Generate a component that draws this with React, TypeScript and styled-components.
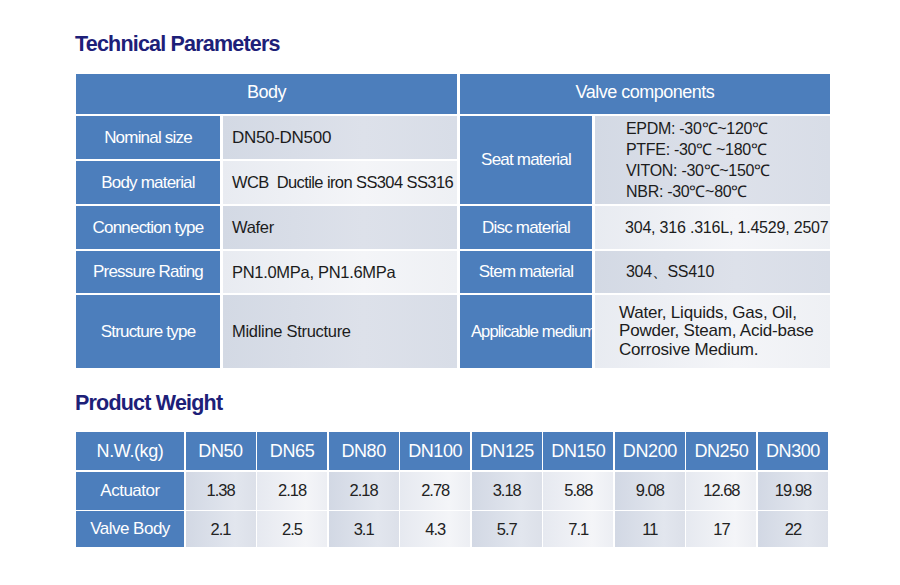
import React from "react";
import styled, { createGlobalStyle, css } from "styled-components";

const Global = createGlobalStyle`
  html, body { margin: 0; padding: 0; background: #ffffff; }
  body { font-family: "Liberation Sans", Arial, sans-serif; }
`;

const Page = styled.div`
  width: 900px;
  height: 585px;
  box-sizing: border-box;
  padding: 32px 0 0 76px;
  display: flex;
  flex-direction: column;
  overflow: hidden;
`;

const Title = styled.h2<{ $mt?: number }>`
  margin: ${(p) => p.$mt ?? 0}px 0 0 -1px;
  font-family: "Liberation Sans", Arial, sans-serif;
  font-weight: 700;
  font-size: 21.5px;
  line-height: 24px;
  letter-spacing: -0.8px;
  color: #1d2078;
`;

const ParamGrid = styled.div`
  margin-top: 18px;
  width: 754px;
  display: grid;
  grid-template-columns: 144px 234px 132px 235px;
  grid-template-rows: 40px 43px 43px 43px 42px 73px;
  column-gap: 3px;
  row-gap: 2px;
`;

const blue = "#4c7ebc";

const Header = styled.div`
  grid-column: span 2;
  background: ${blue};
  color: #ffffff;
  font-size: 18px;
  letter-spacing: -0.5px;
  padding-bottom: 4px;
  display: flex;
  align-items: center;
  justify-content: center;
`;

const Label = styled.div<{ $span?: number; $left?: boolean }>`
  background: ${blue};
  color: #ffffff;
  font-size: 17px;
  letter-spacing: -0.8px;
  white-space: nowrap;
  overflow: hidden;
  display: flex;
  align-items: center;
  justify-content: center;
  ${(p) => p.$span && css`grid-row: span ${p.$span};`}
  ${(p) =>
    p.$left &&
    css`
      justify-content: flex-start;
      padding-left: 11px;
      font-size: 16.5px;
      letter-spacing: -0.9px;
    `}
`;

const Value = styled.div<{ $light?: boolean; $span?: number; $pad?: number; $size?: number; $ls?: number }>`
  background: ${(p) =>
    p.$light
      ? "linear-gradient(90deg, #e8ebf1 0%, #f4f5f8 60%, #eef0f4 100%)"
      : "linear-gradient(90deg, #d3d9e4 0%, #dde1ea 60%, #d8dde7 100%)"};
  color: #1c1c1c;
  font-size: ${(p) => p.$size ?? 16.5}px;
  letter-spacing: ${(p) => p.$ls ?? -0.3}px;
  white-space: nowrap;
  overflow: hidden;
  display: flex;
  flex-direction: column;
  justify-content: center;
  padding-left: ${(p) => p.$pad ?? 9}px;
  ${(p) => p.$span && css`grid-row: span ${p.$span};`}
`;

const Lines = styled.div<{ $lh: number }>`
  line-height: ${(p) => p.$lh}px;
`;

const WeightGrid = styled.div`
  margin-top: 17px;
  width: 752px;
  display: grid;
  grid-template-columns: 108px repeat(9, 1fr);
  grid-template-rows: 38px 38px 36px;
  gap: 1.5px;
`;

const WHead = styled.div`
  background: ${blue};
  color: #ffffff;
  font-size: 18px;
  letter-spacing: -0.4px;
  display: flex;
  align-items: center;
  justify-content: center;
`;

const WLabel = styled.div`
  background: ${blue};
  color: #ffffff;
  font-size: 17px;
  letter-spacing: -0.5px;
  display: flex;
  align-items: center;
  justify-content: center;
`;

const WCell = styled.div<{ $dark: boolean }>`
  background: ${(p) =>
    p.$dark
      ? "linear-gradient(90deg, #d2d8e4 0%, #e2e6ee 70%, #dce0e9 100%)"
      : "linear-gradient(90deg, #e6e9f0 0%, #f4f5f8 70%, #eceef3 100%)"};
  color: #222222;
  font-size: 16.5px;
  letter-spacing: -1px;
  display: flex;
  align-items: center;
  justify-content: center;
`;

const sizes = ["DN50", "DN65", "DN80", "DN100", "DN125", "DN150", "DN200", "DN250", "DN300"];
const actuator = ["1.38", "2.18", "2.18", "2.78", "3.18", "5.88", "9.08", "12.68", "19.98"];
const body = ["2.1", "2.5", "3.1", "4.3", "5.7", "7.1", "11", "17", "22"];

export default function App() {
  return (
    <>
      <Global />
      <Page>
        <Title>Technical Parameters</Title>
        <ParamGrid>
          <Header>Body</Header>
          <Header>Valve components</Header>

          <Label>Nominal size</Label>
          <Value $size={17}>DN50-DN500</Value>
          <Label $span={2}>Seat material</Label>
          <Value $span={2} $pad={31} $size={16}>
            <Lines $lh={21}>
              <div>EPDM: -30℃~120℃</div>
              <div>PTFE: -30℃ ~180℃</div>
              <div>VITON: -30℃~150℃</div>
              <div>NBR: -30℃~80℃</div>
            </Lines>
          </Value>

          <Label>Body material</Label>
          <Value $light $ls={-0.6}>WCB&nbsp; Ductile iron SS304 SS316</Value>

          <Label>Connection type</Label>
          <Value>Wafer</Value>
          <Label>Disc material</Label>
          <Value $light $pad={30} $size={16} $ls={-0.2}>304, 316 .316L, 1.4529, 2507</Value>

          <Label>Pressure Rating</Label>
          <Value $light>PN1.0MPa, PN1.6MPa</Value>
          <Label>Stem material</Label>
          <Value $pad={31} $size={16}>304、SS410</Value>

          <Label>Structure type</Label>
          <Value>Midline Structure</Value>
          <Label $left>Applicable medium</Label>
          <Value $light $pad={24} $size={17} $ls={-0.2}>
            <Lines $lh={18.5}>
              <div>Water, Liquids, Gas, Oil,</div>
              <div>Powder, Steam, Acid-base</div>
              <div>Corrosive Medium.</div>
            </Lines>
          </Value>
        </ParamGrid>

        <Title $mt={23}>Product Weight</Title>
        <WeightGrid>
          <WHead>N.W.(kg)</WHead>
          {sizes.map((s) => (
            <WHead key={s}>{s}</WHead>
          ))}
          <WLabel>Actuator</WLabel>
          {actuator.map((v, i) => (
            <WCell key={"a" + i} $dark={i % 2 === 0}>{v}</WCell>
          ))}
          <WLabel>Valve Body</WLabel>
          {body.map((v, i) => (
            <WCell key={"b" + i} $dark={i % 2 === 0}>{v}</WCell>
          ))}
        </WeightGrid>
      </Page>
    </>
  );
}
